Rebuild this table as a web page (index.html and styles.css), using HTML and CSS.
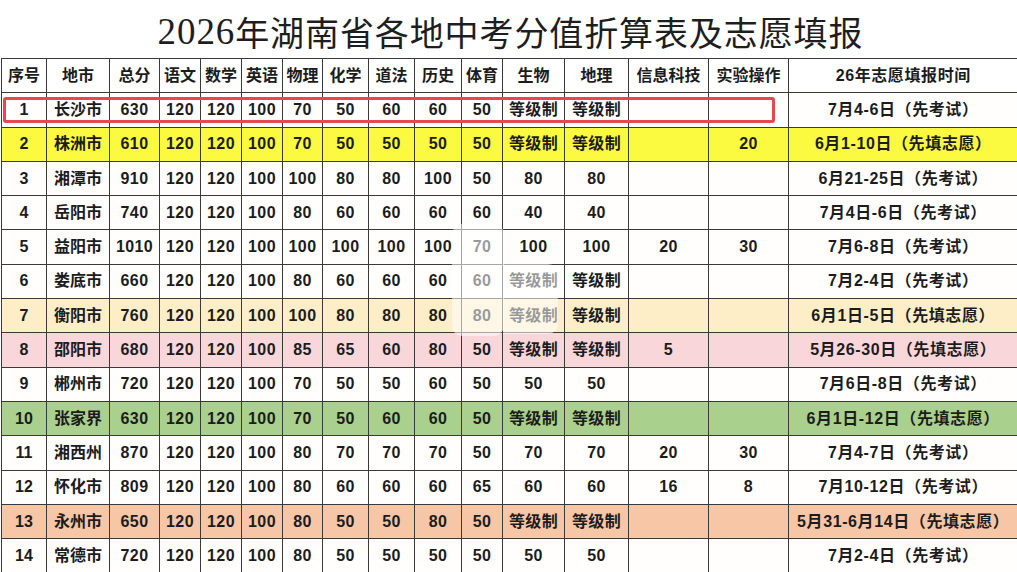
FILE: index.html
```html
<!DOCTYPE html>
<html lang="zh-CN">
<head>
<meta charset="utf-8">
<title>2026年湖南省各地中考分值折算表及志愿填报</title>
<link rel="stylesheet" href="styles.css">
</head>
<body>
<div class="page">
  <h1 class="title"><span class="num">2026</span>年湖南省各地中考分值折算表及志愿填报</h1>
  <table class="grid">
    <colgroup>
      <col class="w45"><col class="w63"><col class="w50"><col class="w41"><col class="w41"><col class="w41"><col class="w40"><col class="w46"><col class="w46"><col class="w47"><col class="w41"><col class="w62"><col class="w64"><col class="w80"><col class="w80"><col class="w229">
    </colgroup>
    <thead>
      <tr><th>序号</th><th>地市</th><th>总分</th><th>语文</th><th>数学</th><th>英语</th><th>物理</th><th>化学</th><th>道法</th><th>历史</th><th>体育</th><th>生物</th><th>地理</th><th>信息科技</th><th>实验操作</th><th>26年志愿填报时间</th></tr>
    </thead>
    <tbody>
      <tr><td>1</td><td>长沙市</td><td>630</td><td>120</td><td>120</td><td>100</td><td>70</td><td>50</td><td>60</td><td>60</td><td>50</td><td>等级制</td><td>等级制</td><td></td><td></td><td>7月4-6日（先考试）</td></tr>
      <tr class="yellow"><td>2</td><td>株洲市</td><td>610</td><td>120</td><td>120</td><td>100</td><td>70</td><td>50</td><td>50</td><td>50</td><td>50</td><td>等级制</td><td>等级制</td><td></td><td>20</td><td>6月1-10日（先填志愿）</td></tr>
      <tr><td>3</td><td>湘潭市</td><td>910</td><td>120</td><td>120</td><td>100</td><td>100</td><td>80</td><td>80</td><td>100</td><td>50</td><td>80</td><td>80</td><td></td><td></td><td>6月21-25日（先考试）</td></tr>
      <tr><td>4</td><td>岳阳市</td><td>740</td><td>120</td><td>120</td><td>100</td><td>80</td><td>60</td><td>60</td><td>60</td><td>60</td><td>40</td><td>40</td><td></td><td></td><td>7月4日-6日（先考试）</td></tr>
      <tr><td>5</td><td>益阳市</td><td>1010</td><td>120</td><td>120</td><td>100</td><td>100</td><td>100</td><td>100</td><td>100</td><td>70</td><td>100</td><td>100</td><td>20</td><td>30</td><td>7月6-8日（先考试）</td></tr>
      <tr><td>6</td><td>娄底市</td><td>660</td><td>120</td><td>120</td><td>100</td><td>80</td><td>60</td><td>60</td><td>60</td><td>60</td><td>等级制</td><td>等级制</td><td></td><td></td><td>7月2-4日（先考试）</td></tr>
      <tr class="peach"><td>7</td><td>衡阳市</td><td>760</td><td>120</td><td>120</td><td>100</td><td>100</td><td>80</td><td>80</td><td>80</td><td>80</td><td>等级制</td><td>等级制</td><td></td><td></td><td>6月1日-5日（先填志愿）</td></tr>
      <tr class="pink"><td>8</td><td>邵阳市</td><td>680</td><td>120</td><td>120</td><td>100</td><td>85</td><td>65</td><td>60</td><td>80</td><td>50</td><td>等级制</td><td>等级制</td><td>5</td><td></td><td>5月26-30日（先填志愿）</td></tr>
      <tr><td>9</td><td>郴州市</td><td>720</td><td>120</td><td>120</td><td>100</td><td>70</td><td>50</td><td>50</td><td>60</td><td>50</td><td>50</td><td>50</td><td></td><td></td><td>7月6日-8日（先考试）</td></tr>
      <tr class="green"><td>10</td><td>张家界</td><td>630</td><td>120</td><td>120</td><td>100</td><td>70</td><td>50</td><td>60</td><td>60</td><td>50</td><td>等级制</td><td>等级制</td><td></td><td></td><td>6月1日-12日（先填志愿）</td></tr>
      <tr><td>11</td><td>湘西州</td><td>870</td><td>120</td><td>120</td><td>100</td><td>80</td><td>70</td><td>70</td><td>70</td><td>50</td><td>70</td><td>70</td><td>20</td><td>30</td><td>7月4-7日（先考试）</td></tr>
      <tr><td>12</td><td>怀化市</td><td>809</td><td>120</td><td>120</td><td>100</td><td>80</td><td>60</td><td>60</td><td>60</td><td>65</td><td>60</td><td>60</td><td>16</td><td>8</td><td>7月10-12日（先考试）</td></tr>
      <tr class="salmon"><td>13</td><td>永州市</td><td>650</td><td>120</td><td>120</td><td>100</td><td>80</td><td>50</td><td>50</td><td>80</td><td>50</td><td>等级制</td><td>等级制</td><td></td><td></td><td>5月31-6月14日（先填志愿）</td></tr>
      <tr><td>14</td><td>常德市</td><td>720</td><td>120</td><td>120</td><td>100</td><td>80</td><td>50</td><td>50</td><td>50</td><td>50</td><td>50</td><td>50</td><td></td><td></td><td>7月2-4日（先考试）</td></tr>
    </tbody>
  </table>
  <div class="mark"></div>
  <div class="fade fade-a"></div>
  <div class="fade fade-b"></div>
</div>
</body>
</html>
```

FILE: styles.css
```css
html, body {
  margin: 0;
  padding: 0;
  background: #ffffff;
}
body {
  width: 1017px;
  height: 572px;
  overflow: hidden;
  font-family: "Liberation Sans", "Noto Sans CJK SC", sans-serif;
}
.page {
  position: relative;
  width: 1017px;
  height: 572px;
}
.title {
  margin: 0;
  height: 58px;
  display: flex;
  align-items: center;
  justify-content: center;
  padding-left: 4px;
  padding-top: 4px;
  box-sizing: border-box;
  font-family: "Noto Sans CJK SC", sans-serif;
  font-weight: 400;
  font-size: 34px;
  color: #1e1e1e;
  letter-spacing: 0.9px;
}
.title .num {
  font-family: "Liberation Serif", serif;
  font-size: 37px;
}
.grid {
  margin-left: 1px;
  border-collapse: collapse;
  table-layout: fixed;
  width: 1016px;
  color: #1c1c1c;
  font-size: 16px;
  font-weight: 700;
}
.grid th, .grid td {
  height: 34.3px;
  padding: 0;
  border: 1px solid #3a3a3a;
  text-align: center;
  vertical-align: middle;
  white-space: nowrap;
  box-sizing: border-box;
  background: #fffefc;
  line-height: 1;
}
.grid th {
  font-weight: 700;
  background: #ffffff;
}
.grid td:nth-child(n+3) { letter-spacing: 0.4px; }
.grid td:last-child, .grid th:last-child {
  border-right: none;
  letter-spacing: 0.6px;
}

.w45 { width: 45px; }
.w63 { width: 63px; }
.w50 { width: 50px; }
.w41 { width: 41px; }
.w40 { width: 40px; }
.w46 { width: 46px; }
.w47 { width: 47px; }
.w62 { width: 62px; }
.w64 { width: 64px; }
.w80 { width: 80px; }
.w229 { width: 229px; }

.yellow td { background: #fbf940; }
.peach td { background: #fdeec8; }
.pink td { background: #f8d6da; }
.green td { background: #a9d08c; }
.salmon td { background: #f7c6a6; }

.mark {
  position: absolute;
  left: 3px;
  top: 97px;
  width: 772px;
  height: 26px;
  border: 3px solid #e9474e;
  border-radius: 3px;
  box-sizing: border-box;
}
.fade {
  position: absolute;
  background: rgba(255, 255, 255, 0.55);
  border-radius: 10px;
}
.fade-a {
  left: 452px;
  top: 224px;
  width: 52px;
  height: 112px;
}
.fade-b {
  left: 503px;
  top: 264px;
  width: 55px;
  height: 70px;
  border-radius: 0 10px 10px 0;
}
```
